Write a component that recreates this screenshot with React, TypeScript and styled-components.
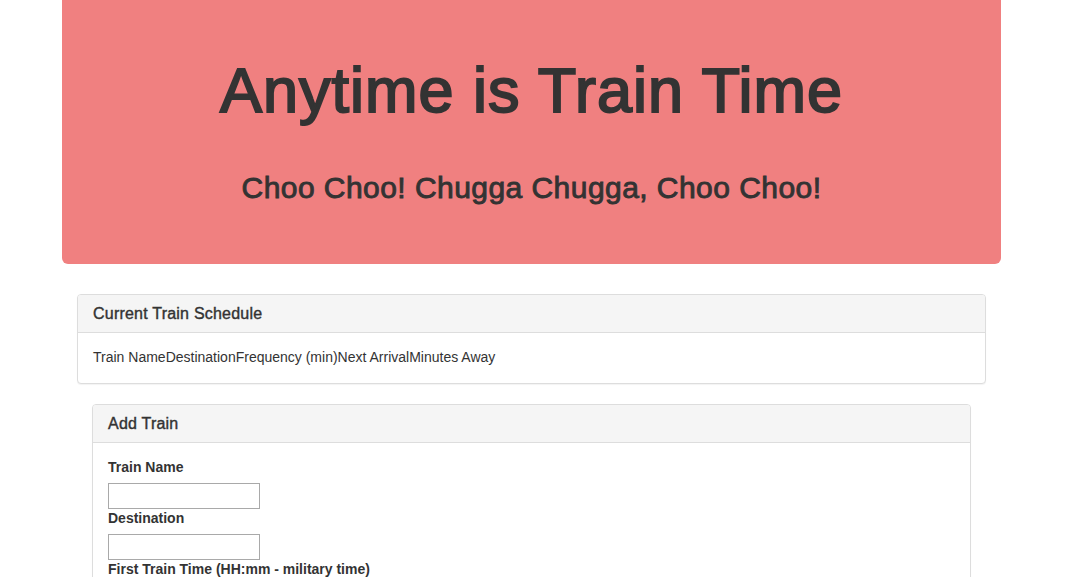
import React from "react";
import styled, { createGlobalStyle } from "styled-components";

const Global = createGlobalStyle`
  html, body { margin: 0; padding: 0; background: #fff; }
  body {
    font-family: "Liberation Sans", Arial, Helvetica, sans-serif;
    font-size: 14px;
    line-height: 1.42857;
    color: #333;
  }
  * { box-sizing: border-box; }
`;

const Page = styled.div`
  width: 939px;
  margin-left: 62px;
`;

const Jumbotron = styled.header`
  background: #f08080;
  border-radius: 0 0 6px 6px;
  padding: 56px 60px 60px;
  margin-bottom: 30px;
  text-align: center;
`;

const Title = styled.h1`
  margin: 0 0 46px;
  font-size: 63px;
  font-weight: 500;
  line-height: 1.1;
  letter-spacing: 1px;
  -webkit-text-stroke: 2px #333;
  color: #333;
`;

const Subtitle = styled.h2`
  margin: 0;
  font-size: 30px;
  font-weight: 500;
  line-height: 1.1;
  letter-spacing: 0.45px;
  -webkit-text-stroke: 0.9px #333;
  color: #333;
`;

const Row = styled.div<{ $inset?: number }>`
  padding: 0 ${(p) => p.$inset ?? 15}px;
`;

const Panel = styled.section`
  border: 1px solid #ddd;
  border-radius: 4px;
  background: #fff;
  margin-bottom: 20px;
  box-shadow: 0 1px 1px rgba(0, 0, 0, 0.05);
  overflow: hidden;
`;

const PanelHeading = styled.div`
  background: #f5f5f5;
  border-bottom: 1px solid #ddd;
  padding: 10px 15px;
`;

const PanelTitle = styled.h3`
  margin: 0;
  font-size: 16px;
  font-weight: 500;
  line-height: 17px;
  letter-spacing: 0.22px;
  -webkit-text-stroke: 0.4px #333;
  color: #333;
`;

const PanelBody = styled.div`
  padding: 15px;
`;

const Label = styled.label`
  display: block;
  font-weight: 700;
  margin-bottom: 5px;
`;

const Input = styled.input`
  display: block;
  width: 152px;
  height: 26px;
  border: 1px solid #a9a9a9;
  padding: 2px 4px;
  font: inherit;
  margin: 0;
`;

export default function App() {
  return (
    <>
      <Global />
      <Page>
        <Jumbotron>
          <Title>Anytime is Train Time</Title>
          <Subtitle>Choo Choo! Chugga Chugga, Choo Choo!</Subtitle>
        </Jumbotron>
        <Row>
          <Panel>
            <PanelHeading>
              <PanelTitle>Current Train Schedule</PanelTitle>
            </PanelHeading>
            <PanelBody>
              <span>Train Name</span>
              <span>Destination</span>
              <span>Frequency (min)</span>
              <span>Next Arrival</span>
              <span>Minutes Away</span>
            </PanelBody>
          </Panel>
          <Row>
            <Panel>
              <PanelHeading>
                <PanelTitle>Add Train</PanelTitle>
              </PanelHeading>
              <PanelBody>
                <Label htmlFor="name">Train Name</Label>
                <Input id="name" />
                <Label htmlFor="dest">Destination</Label>
                <Input id="dest" />
                <Label htmlFor="first">First Train Time (HH:mm - military time)</Label>
                <Input id="first" />
                <Label htmlFor="freq">Frequency (min)</Label>
                <Input id="freq" />
              </PanelBody>
            </Panel>
          </Row>
        </Row>
      </Page>
    </>
  );
}
